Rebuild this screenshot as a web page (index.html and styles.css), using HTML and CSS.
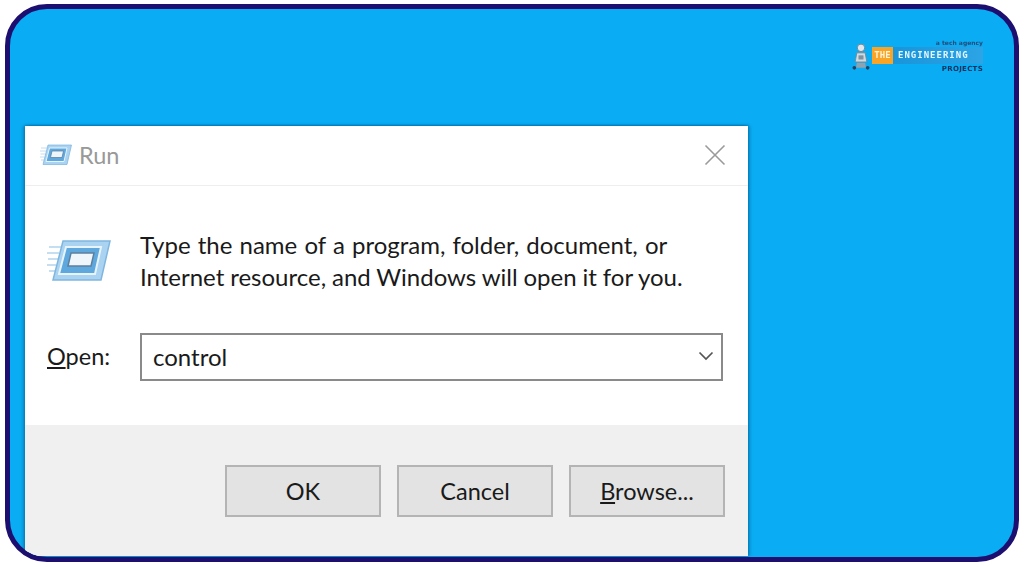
FILE: index.html
```html
<!DOCTYPE html>
<html lang="en">
<head>
<meta charset="utf-8">
<title>Run</title>
<link rel="stylesheet" href="styles.css">
</head>
<body>
<main class="desktop">
  <div class="logo">
    <svg class="logo-robot" width="20" height="34" viewBox="0 0 24 34">
      <circle cx="12" cy="6" r="4.500" fill="#dfe8ee" stroke="#6f8594" stroke-width="1.200"/>
      <path d="M7 12h10l2 11H5z" fill="#cfdbe3" stroke="#6f8594"/>
      <rect x="9" y="15" width="6" height="5" fill="#7e92a0"/>
      <path d="M7 24h10l1 6H6z" fill="#8fa2af"/>
      <circle cx="4" cy="30" r="2.200" fill="#24405c"/>
      <circle cx="20" cy="30" r="2.200" fill="#24405c"/>
    </svg>
    <div class="logo-text">
      <div class="logo-top">a tech agency</div>
      <div class="logo-band"><span class="logo-the">THE</span><span class="logo-eng">ENGINEERING</span></div>
      <div class="logo-bottom">PROJECTS</div>
    </div>
  </div>
  <section class="dialog">
    <header class="titlebar">
      <svg class="run-icon" width="32" height="22" viewBox="0 0 64 44">
        <use href="#runglyph"/>
      </svg>
      <span class="title">Run</span>
      <svg class="close" width="22" height="22" viewBox="0 0 22 22"><path d="M1.500 1.500l19 19M20.500 1.500l-19 19" stroke="#9a9a9a" stroke-width="1.600" fill="none"/></svg>
    </header>
    <div class="body">
      <div class="intro">
        <svg class="big-icon" width="64" height="44" viewBox="0 0 64 44">
          <defs>
            <g id="runglyph">
              <path d="M2 8h12M0 14h12M1 20h10M0 26h9M2 32h7" stroke="#c4def2" stroke-width="2" fill="none"/>
              <path d="M16 2h47l-9 39H6z" fill="#a9d3f0" stroke="#7fb6e0" stroke-width="1.500"/>
              <path d="M19 8h35l-6 27H12z" fill="#5fa8de" stroke="#e8f4fc" stroke-width="2"/>
              <path d="M24 14h23l-3 13H21z" fill="#eef6fc" stroke="#5d7f9c" stroke-width="1.500"/>
            </g>
          </defs>
          <use href="#runglyph"/>
        </svg>
        <p class="message"><span class="line-one">Type the name of a program, folder, document, or</span><br><span class="line-two">Internet resource, and Windows will open it for you.</span></p>
      </div>
      <div class="open-row">
        <label class="open-label"><u>O</u>pen:</label>
        <div class="combo">
          <span>control</span>
          <svg width="16" height="10" viewBox="0 0 16 10"><path d="M1.500 1.500L8 8l6.500-6.500" stroke="#555" stroke-width="1.700" fill="none"/></svg>
        </div>
      </div>
    </div>
    <footer class="footer">
      <button class="btn">OK</button>
      <button class="btn">Cancel</button>
      <button class="btn"><u>B</u>rowse...</button>
    </footer>
  </section>
</main>
</body>
</html>
```
FILE: styles.css
```css
* { box-sizing: border-box; }
html, body { margin: 0; height: 100%; background: #fff; }
body { padding: 4px 5px; font-family: Lato, "Open Sans", sans-serif; }
.desktop {
  position: relative;
  width: 1014px;
  height: 558px;
  border: 5px solid #1c0f6f;
  border-radius: 42px;
  background: #0aadf3;
  overflow: hidden;
  padding: 117px 0 0 15px;
}
.logo {
  position: absolute;
  left: 841px;
  top: 30px;
  display: flex;
  align-items: center;
  gap: 1px;
  filter: blur(.5px);
}
.logo-robot { flex: none; }
.logo-text { display: flex; flex-direction: column; width: 111px; }
.logo-top { font: 700 6px/8px "DejaVu Sans", sans-serif; color: #2a4a78; text-align: right; }
.logo-band {
  display: flex;
  align-items: center;
  height: 17px;
  background: linear-gradient(90deg, #1591d6, #2ca4e6);
  font: 700 9px/17px "DejaVu Sans Mono", monospace;
  color: #e6f6ff;
  letter-spacing: 1px;
}
.logo-the { background: #f8a426; color: #fff3d8; width: 21px; text-align: center; letter-spacing: 0; margin-right: 5px; line-height: 17px; }
.logo-eng { white-space: nowrap; }
.logo-bottom { font: 700 7px/10px "DejaVu Sans", sans-serif; color: #12305c; text-align: right; letter-spacing: .3px; }
.dialog {
  width: 723px;
  height: 430px;
  background: #fff;
  box-shadow: -2px 0 3px rgba(0, 60, 110, .35), 2px 0 3px rgba(0, 60, 110, .35), 0 -1px 2px rgba(0, 60, 110, .25);
  display: flex;
  flex-direction: column;
}
.titlebar {
  height: 60px;
  flex: none;
  display: flex;
  align-items: center;
  padding: 0 22px 2px 15px;
  border-bottom: 1px solid #eeeeee;
}
.run-icon { flex: none; }
.title { margin-left: 7px; font-size: 23.500px; color: #999; flex: 1; }
.close { flex: none; }
.body { flex: 1; padding: 0 25px 0 22px; }
.intro { display: flex; align-items: flex-start; padding-top: 43px; }
.big-icon { flex: none; margin-top: 10px; }
.message { margin: 0 0 0 29px; font-size: 24px; line-height: 32px; color: #1a1a1a; white-space: nowrap; }
.line-one { word-spacing: 1px; }
.line-two { word-spacing: -.25px; }
.open-row { display: flex; align-items: center; margin-top: 40px; }
.open-label { width: 93px; font-size: 23.500px; color: #1a1a1a; padding-bottom: 2px; }
.combo {
  width: 583px;
  height: 48px;
  border: 2px solid #8a8a8a;
  display: flex;
  align-items: center;
  justify-content: space-between;
  padding: 0 7px 2px 11px;
  font-size: 24px;
  color: #1a1a1a;
  background: #fff;
}
.footer {
  height: 131px;
  flex: none;
  background: #f0f0f0;
  display: flex;
  align-items: flex-start;
  gap: 16px;
  padding: 40px 0 0 200px;
}
.btn {
  width: 156px;
  height: 52px;
  border: 2px solid #b4b4b4;
  background: #e3e3e3;
  font: 23.500px Lato, "Open Sans", sans-serif;
  color: #1a1a1a;
  padding: 0;
}
```
